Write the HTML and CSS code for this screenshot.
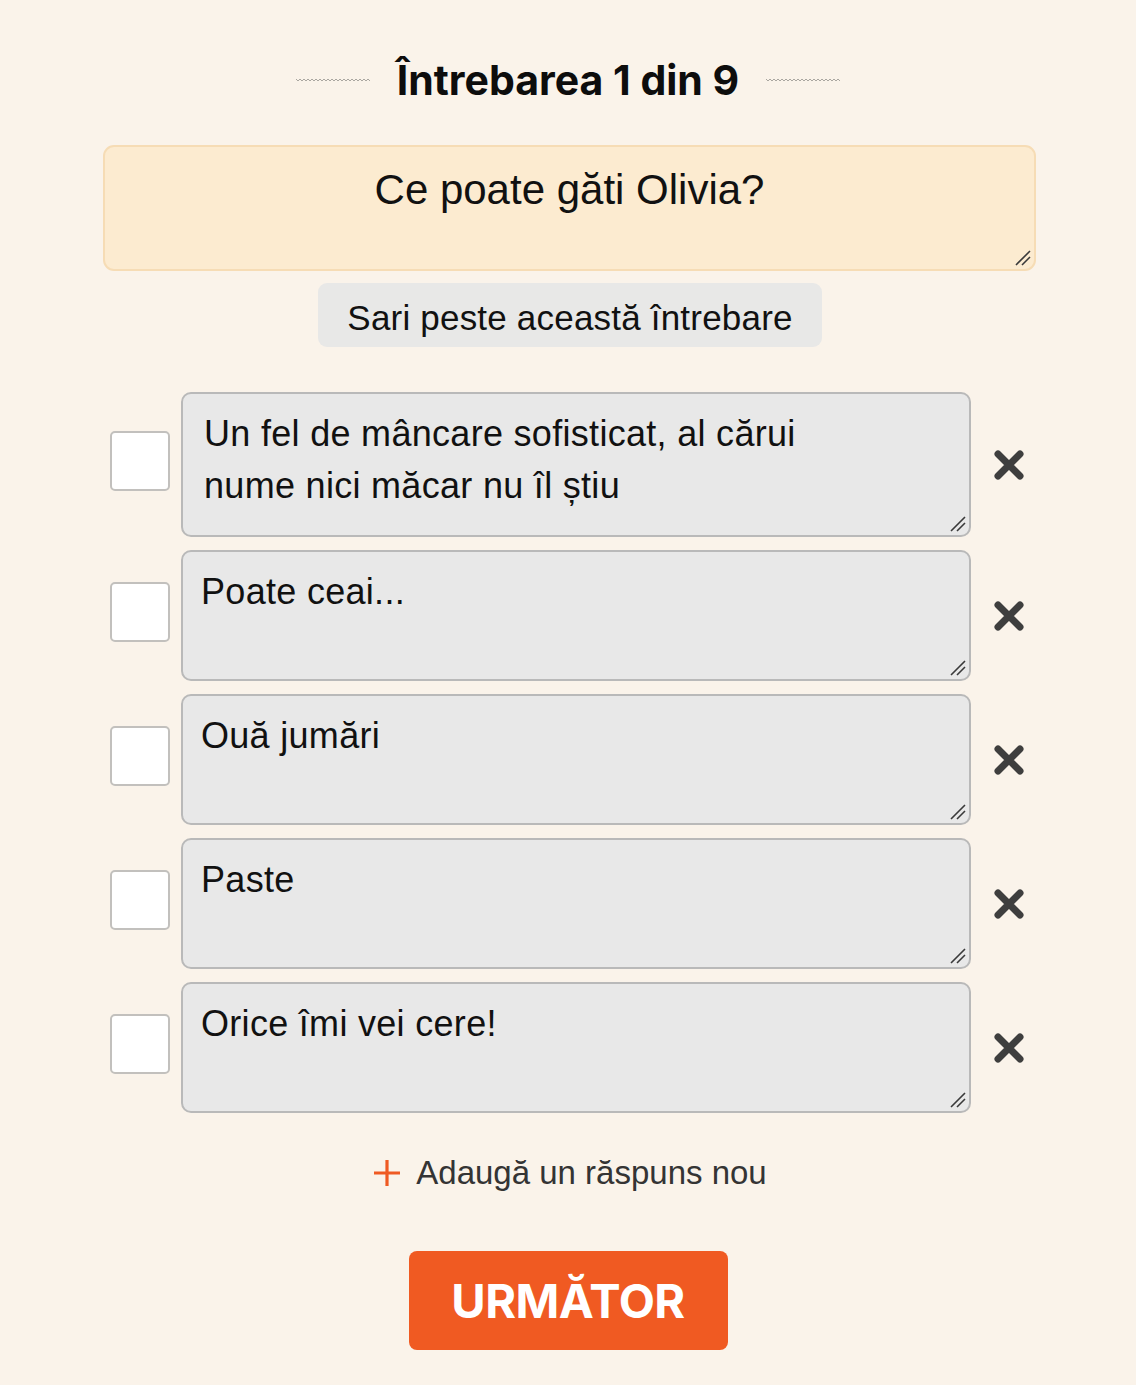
FILE: index.html
```html
<!DOCTYPE html>
<html lang="ro">
<head>
<meta charset="utf-8">
<title>Întrebarea 1 din 9</title>
<link rel="stylesheet" href="styles.css">
</head>
<body>
<main class="page">
  <header class="title-row">
    <svg class="wave" width="74" height="6" viewBox="0 0 74 6"><polyline points="0,2 2,4 4,2 6,4 8,2 10,4 12,2 14,4 16,2 18,4 20,2 22,4 24,2 26,4 28,2 30,4 32,2 34,4 36,2 38,4 40,2 42,4 44,2 46,4 48,2 50,4 52,2 54,4 56,2 58,4 60,2 62,4 64,2 66,4 68,2 70,4 72,2 74,4" fill="none" stroke="#a9a6a0" stroke-width="1"/></svg>
    <h1 class="title">Întrebarea 1 din 9</h1>
    <svg class="wave" width="74" height="6" viewBox="0 0 74 6"><polyline points="0,2 2,4 4,2 6,4 8,2 10,4 12,2 14,4 16,2 18,4 20,2 22,4 24,2 26,4 28,2 30,4 32,2 34,4 36,2 38,4 40,2 42,4 44,2 46,4 48,2 50,4 52,2 54,4 56,2 58,4 60,2 62,4 64,2 66,4 68,2 70,4 72,2 74,4" fill="none" stroke="#a9a6a0" stroke-width="1"/></svg>
  </header>

  <div class="field question-field">
    <textarea class="question">Ce poate găti Olivia?</textarea>
    <svg class="grip" width="16" height="16" viewBox="0 0 16 16"><path d="M1 15 L15 1 M7 15 L15 7" stroke="#3a3a3a" stroke-width="1.6"/></svg>
  </div>

  <div class="skip-wrap"><button class="skip">Sari peste această întrebare</button></div>

  <section class="answers">
    <div class="answer">
      <span class="check"></span>
      <div class="field">
        <textarea class="answer-text tall">Un fel de mâncare sofisticat, al cărui
nume nici măcar nu îl știu</textarea>
        <svg class="grip" width="16" height="16" viewBox="0 0 16 16"><path d="M1 15 L15 1 M7 15 L15 7" stroke="#3a3a3a" stroke-width="1.6"/></svg>
      </div>
      <span class="remove"><svg width="32" height="32" viewBox="0 0 32 32"><path d="M5 5 L27 27 M27 5 L5 27" stroke="#3e3e3e" stroke-width="7" stroke-linecap="round"/></svg></span>
    </div>
    <div class="answer">
      <span class="check"></span>
      <div class="field">
        <textarea class="answer-text">Poate ceai...</textarea>
        <svg class="grip" width="16" height="16" viewBox="0 0 16 16"><path d="M1 15 L15 1 M7 15 L15 7" stroke="#3a3a3a" stroke-width="1.6"/></svg>
      </div>
      <span class="remove"><svg width="32" height="32" viewBox="0 0 32 32"><path d="M5 5 L27 27 M27 5 L5 27" stroke="#3e3e3e" stroke-width="7" stroke-linecap="round"/></svg></span>
    </div>
    <div class="answer">
      <span class="check"></span>
      <div class="field">
        <textarea class="answer-text">Ouă jumări</textarea>
        <svg class="grip" width="16" height="16" viewBox="0 0 16 16"><path d="M1 15 L15 1 M7 15 L15 7" stroke="#3a3a3a" stroke-width="1.6"/></svg>
      </div>
      <span class="remove"><svg width="32" height="32" viewBox="0 0 32 32"><path d="M5 5 L27 27 M27 5 L5 27" stroke="#3e3e3e" stroke-width="7" stroke-linecap="round"/></svg></span>
    </div>
    <div class="answer">
      <span class="check"></span>
      <div class="field">
        <textarea class="answer-text">Paste</textarea>
        <svg class="grip" width="16" height="16" viewBox="0 0 16 16"><path d="M1 15 L15 1 M7 15 L15 7" stroke="#3a3a3a" stroke-width="1.6"/></svg>
      </div>
      <span class="remove"><svg width="32" height="32" viewBox="0 0 32 32"><path d="M5 5 L27 27 M27 5 L5 27" stroke="#3e3e3e" stroke-width="7" stroke-linecap="round"/></svg></span>
    </div>
    <div class="answer">
      <span class="check"></span>
      <div class="field">
        <textarea class="answer-text">Orice îmi vei cere!</textarea>
        <svg class="grip" width="16" height="16" viewBox="0 0 16 16"><path d="M1 15 L15 1 M7 15 L15 7" stroke="#3a3a3a" stroke-width="1.6"/></svg>
      </div>
      <span class="remove"><svg width="32" height="32" viewBox="0 0 32 32"><path d="M5 5 L27 27 M27 5 L5 27" stroke="#3e3e3e" stroke-width="7" stroke-linecap="round"/></svg></span>
    </div>
  </section>

  <div class="add-row">
    <span class="plus"><svg width="28" height="28" viewBox="0 0 28 28"><path d="M14 1 V27 M1 14 H27" stroke="#ef5a23" stroke-width="3.2"/></svg></span>
    <span class="add-text">Adaugă un răspuns nou</span>
  </div>

  <div class="next-wrap"><button class="next">URMĂTOR</button></div>
</main>
</body>
</html>
```

FILE: styles.css
```css
* { box-sizing: border-box; }

html, body {
  margin: 0;
  padding: 0;
  background: #faf3ea;
}

body {
  font-family: "Liberation Sans", Arial, sans-serif;
  color: #111;
}

.page {
  width: 1136px;
  height: 1385px;
  padding-top: 54px;
}

.title-row {
  display: flex;
  align-items: center;
  justify-content: center;
  gap: 27px;
  height: 52px;
}

.title {
  margin: 0;
  font-family: Inter, "Liberation Sans", sans-serif;
  font-weight: 700;
  font-size: 41px;
  letter-spacing: 0;
  line-height: 52px;
  color: #0d0d0d;
}

.wave { display: block; }

.field {
  position: relative;
}

.grip {
  position: absolute;
  right: 5px;
  bottom: 5px;
  pointer-events: none;
}

.question-field {
  width: 933px;
  margin: 39px 0 0 103px;
}

.question {
  display: block;
  width: 933px;
  height: 126px;
  padding: 18px 20px;
  background: #fcebd0;
  border: 2px solid #f6dcb5;
  border-radius: 11px;
  font-family: "Liberation Sans", Arial, sans-serif;
  font-size: 42px;
  line-height: 50px;
  text-align: center;
  color: #111;
  resize: none;
  outline: none;
  overflow: hidden;
}

.skip-wrap {
  display: flex;
  justify-content: center;
  margin-top: 12px;
}

.skip {
  width: 504px;
  height: 64px;
  margin-left: 4px;
  border: none;
  border-radius: 9px;
  background: #e8e8e7;
  font-family: "Liberation Sans", Arial, sans-serif;
  font-size: 35px;
  letter-spacing: 0.2px;
  color: #111;
  padding: 5px 0 0;
}

.answers {
  display: flex;
  flex-direction: column;
  gap: 13px;
  margin-top: 45px;
  padding-left: 110px;
}

.answer {
  display: grid;
  grid-template-columns: 60px 790px 54px;
  column-gap: 11px;
  align-items: center;
}

.check {
  display: block;
  width: 60px;
  height: 60px;
  background: #fff;
  border: 2px solid #c2c0bd;
  border-radius: 5px;
  margin-top: -8px;
}

.answer-text {
  display: block;
  width: 790px;
  height: 131px;
  padding: 14px 18px;
  background: #e8e8e8;
  border: 2px solid #b9b9b9;
  border-radius: 10px;
  font-family: "Liberation Sans", Arial, sans-serif;
  font-size: 36px;
  letter-spacing: 0.3px;
  line-height: 52px;
  color: #111;
  resize: none;
  outline: none;
  overflow: hidden;
  white-space: pre-wrap;
}

.answer-text.tall {
  height: 145px;
  padding-left: 21px;
}

.remove {
  display: flex;
  justify-content: center;
  align-items: center;
}

.add-row {
  display: flex;
  align-items: center;
  justify-content: center;
  gap: 15px;
  margin-top: 40px;
  margin-left: 4px;
  height: 40px;
}

.plus { display: flex; }

.add-text {
  font-family: "Liberation Sans", Arial, sans-serif;
  font-size: 33px;
  color: #343434;
}

.next-wrap {
  display: flex;
  justify-content: center;
  margin-top: 58px;
}

.next {
  width: 319px;
  height: 99px;
  border: none;
  border-radius: 8px;
  background: #f05a22;
  color: #fff;
  font-family: Inter, "Liberation Sans", sans-serif;
  font-weight: 700;
  font-size: 47px;
  letter-spacing: -0.5px;
  padding: 0;
}
```
